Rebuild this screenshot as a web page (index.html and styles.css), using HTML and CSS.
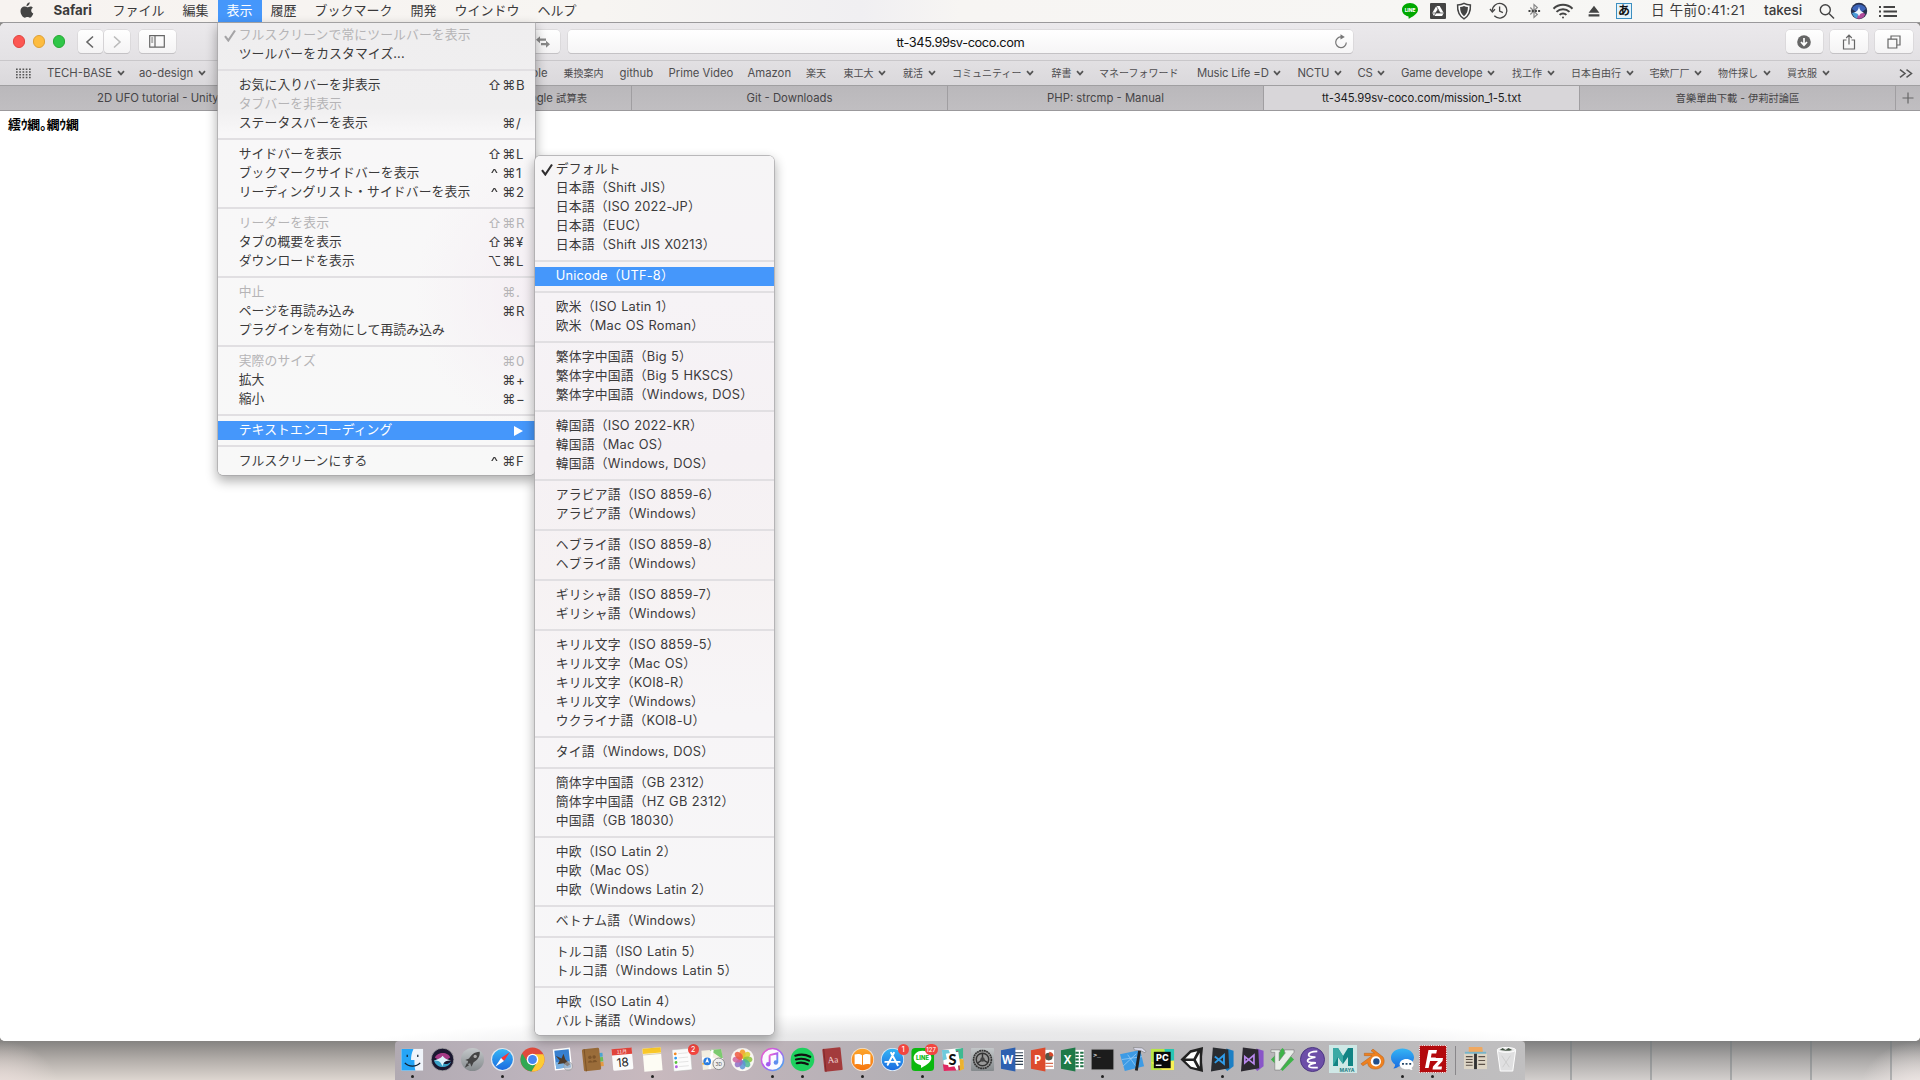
FILE: index.html
```html
<!DOCTYPE html>
<html lang="ja">
<head>
<meta charset="utf-8">
<title>tt-345.99sv-coco.com/mission_1-5.txt</title>
<link rel="stylesheet" href="styles.css">
</head>
<body>
<svg class="defs" width="0" height="0">
  <defs>
    <symbol id="chev" viewBox="0 0 8 6"><path d="M1 1.2L4 4.4L7 1.2" fill="none" stroke="#555" stroke-width="1.7"/></symbol>
    <symbol id="check" viewBox="0 0 12 13"><path d="M1 7.2L4.3 11.5L11 1.5" fill="none" stroke="currentColor" stroke-width="2.1"/></symbol>
    <linearGradient id="blue" x1="0" y1="0" x2="0" y2="1"><stop offset="0" stop-color="#35b5f5"/><stop offset="1" stop-color="#1a6be0"/></linearGradient>
    <linearGradient id="orange" x1="0" y1="0" x2="0" y2="1"><stop offset="0" stop-color="#fda62c"/><stop offset="1" stop-color="#f6760f"/></linearGradient>
    <linearGradient id="silver" x1="0" y1="0" x2="0" y2="1"><stop offset="0" stop-color="#c4c8ca"/><stop offset="1" stop-color="#858a8d"/></linearGradient>
    <linearGradient id="tune" x1="0" y1="0" x2="1" y2="1"><stop offset="0" stop-color="#f560c8"/><stop offset=".5" stop-color="#b060f0"/><stop offset="1" stop-color="#30b8f0"/></linearGradient>
  </defs>
</svg>
<div class="desktop">
  <header class="menubar">
    <nav class="menus">
      <span class="apple"><svg width="14" height="17" viewBox="0 0 14 17"><path fill="#444" d="M9.7 0.3c.1 1.200-.4 2.100-1 2.800-.6.700-1.400 1.200-2.200 1.100-.1-1.100.4-2.100.9-2.700C8 .8 8.900.4 9.700.3zM12.900 5.800c-1.100.7-1.700 1.600-1.700 2.800 0 1.400.8 2.400 2.100 3-.5 1.400-1.800 4.100-3.300 4.100-1 0-1.500-.6-2.600-.6s-1.600.6-2.600.6C2.900 15.700.5 12.300.5 9 .5 6.100 2.400 4.500 4.400 4.500c1.100 0 2 .7 2.900.7.800 0 1.800-.8 3.200-.8 1 0 1.800.5 2.400 1.400z"/></svg></span>
      <span class="mi app">Safari</span><span class="mi">ファイル</span><span class="mi">編集</span><span class="mi on">表示</span><span class="mi">履歴</span><span class="mi">ブックマーク</span><span class="mi">開発</span><span class="mi">ウインドウ</span><span class="mi">ヘルプ</span>
    </nav>
    <div class="status">
      <svg viewBox="0 0 18 18" width="18" height="18"><path fill="#00a800" d="M9 1C4.300 1 1 4 1 7.700c0 3.300 2.700 5.700 6 6.500.8.200.6 1.300.6 2.600 3-1.600 9.400-4.800 9.400-9.100C17 4 13.700 1 9 1z"/><text x="9" y="10" class="t-line">LINE</text></svg>
      <svg viewBox="0 0 18 18" width="18" height="18"><rect x="1" y="1" width="16" height="16" rx="1" fill="#444"/><path d="M7.300 4h3.400l4 7-1.600 3H5L3.300 11z" fill="#fff"/><path d="M9 7.200l2.200 3.800H6.800z" fill="#444"/><path d="M7.300 4l3.800 7M3.500 11h11M9 7.200L5.200 14" stroke="#444" stroke-width=".7"/></svg>
      <svg viewBox="0 0 16 18" width="16" height="18"><path d="M8 1.300C6 2.500 3.600 2.900 1.600 2.900 1.300 9 3 14 8 16.800 13 14 14.700 9 14.400 2.900 12.400 2.900 10 2.500 8 1.300z" fill="#fff" stroke="#444" stroke-width="1.500"/><path d="M8 4C6.700 4.800 5.400 5 4.100 5.100 4 9 5 12 8 14.200 11 12 12 9 11.900 5.100 10.600 5 9.300 4.800 8 4z" fill="#444"/></svg>
      <svg viewBox="0 0 20 18" width="20" height="18" fill="none" stroke="#444" stroke-width="1.300"><path d="M3.300 8.800a7.300 7.300 0 1 1 2 5"/><path d="M1 7l2.300 2.900L6 7.200M10.600 4.500V9.200l3.300 1.500"/></svg>
      <svg viewBox="0 0 14 18" width="14" height="18" fill="none" stroke="#888" stroke-width="1.200"><path d="M3.300 5.500l7 7L7 15.500v-13l3.300 3-7 7"/><path stroke="#444" stroke-width="2" stroke-dasharray="2 1.200" d="M1.500 9h12"/></svg>
      <svg viewBox="0 0 22 18" width="22" height="18" fill="none" stroke="#444" stroke-width="2"><path d="M1.500 6.700a13.500 13.500 0 0 1 19 0M4.500 9.900a9.200 9.200 0 0 1 13 0M7.600 12.900a4.800 4.800 0 0 1 6.800 0"/><circle cx="11" cy="15.400" r="1" fill="#444" stroke="none"/></svg>
      <svg viewBox="0 0 14 18" width="14" height="18" fill="#444"><path d="M7 3.800l5.400 7H1.600zM1.600 12.300h10.800v2.200H1.600z"/></svg>
      <span class="ime">あ</span>
      <span class="clock">日 午前0:41:21</span>
      <span class="user">takesi</span>
      <svg viewBox="0 0 18 18" width="18" height="18" fill="none" stroke="#444" stroke-width="1.400"><circle cx="7.300" cy="7.800" r="5"/><path d="M11 11.500l5 5"/></svg>
      <svg viewBox="0 0 18 18" width="18" height="18"><circle cx="9" cy="9" r="8.200" fill="#26304f"/><path d="M2 7C4 1 14 1 16 7L9 12z" fill="#3b63b8"/><path d="M9 9L15.500 12C13 17 9 17.500 6 16z" fill="#b04a9a"/><path d="M9 9L2 11C3 14 5 16 7 16.500z" fill="#4a9cd8"/><path d="M9 4.500C9.500 8 11 9.500 14 11 11.500 10.800 10 11.200 9 14.500 8 11.200 6.500 10.800 4 11 7 9.500 8.500 8 9 4.500z" fill="#eef6ff"/></svg>
      <svg viewBox="0 0 18 18" width="18" height="18" fill="#444"><path d="M0 4h2v2H0zM4.500 4h11.500v2H4.500zM0 8.500h2v2H0zM4.500 8.500h13.500v2H4.500zM0 13h2v2H0zM4.500 13h13.500v2H4.500z"/></svg>
    </div>
  </header>

  <main class="window">
    <div class="toolbar">
      <div class="lights"><i class="r"></i><i class="y"></i><i class="g"></i></div>
      <div class="navs">
        <span class="btn b26"><svg width="10" height="14" viewBox="0 0 10 14"><path d="M8 1.500L2 7l6 5.500" fill="none" stroke="#666" stroke-width="1.600"/></svg></span>
        <span class="btn b26"><svg width="10" height="14" viewBox="0 0 10 14"><path d="M2 1.500L8 7l-6 5.500" fill="none" stroke="#bbb" stroke-width="1.600"/></svg></span>
      </div>
      <span class="btn b38 side"><svg width="16" height="13" viewBox="0 0 16 13" fill="none" stroke="#666" stroke-width="1.200"><path d="M.7.7h14.600v11.400H.7zM6 .7v11.400"/><path stroke-width="1" d="M2.200 3h2M2.200 5h2M2.200 7h2"/></svg></span>
      <span class="btn b38 swap"><svg width="14" height="12" viewBox="0 0 14 12" fill="#888"><path d="M0 3.700L4 .2v2.400h6v2.200H4v2.400zM14 8.200l-4 3.500V9.300H5V7.100h5V4.700z"/></svg></span>
      <div class="address"><span>tt-345.99sv-coco.com</span><svg width="14" height="15" viewBox="0 0 14 15" fill="none" stroke="#777" stroke-width="1.200"><path d="M7.500 3A5.300 5.300 0 1 0 12.300 8.500"/><path d="M6.500.3v5.200l4.300-2.500z" fill="#777" stroke="none"/></svg></div>
      <div class="tools">
        <span class="btn b38"><svg width="14" height="14" viewBox="0 0 14 14"><circle cx="7" cy="7" r="6.800" fill="#666"/><path d="M7 3v6.500M4 7l3 3.200L10 7" stroke="#fff" stroke-width="1.700" fill="none"/></svg></span>
        <span class="btn b38"><svg width="14" height="16" viewBox="0 0 14 16" fill="none" stroke="#666" stroke-width="1.200"><path d="M4.500 6H1.500v9h11V6h-3M7 10.500V1.500M4.200 4L7 1.200 9.800 4"/></svg></span>
        <span class="btn b38"><svg width="14" height="14" viewBox="0 0 14 14" fill="none" stroke="#666" stroke-width="1.200"><path d="M1 4.200h8.800V13H1zM4 4V1h9v9h-3"/></svg></span>
      </div>
    </div>
    <div class="favs">
      <span class="grid"><svg width="15" height="11" viewBox="0 0 15 11"><path d="M0 1.200h15M0 4h15M0 6.800h15M0 9.600h15" stroke="#555" stroke-width="1.500" stroke-dasharray="1.700 1.550"/></svg></span>
      <span>TECH-BASE<svg><use href="#chev"/></svg></span>
      <span>ao-design<svg><use href="#chev"/></svg></span>
      <span class="end">Apple</span>
      <span class="cj">乗換案内</span>
      <span>github</span>
      <span>Prime Video</span>
      <span>Amazon</span>
      <span class="cj">楽天</span>
      <span class="cj">東工大<svg><use href="#chev"/></svg></span>
      <span class="cj">就活<svg><use href="#chev"/></svg></span>
      <span class="cj">コミュニティー<svg><use href="#chev"/></svg></span>
      <span class="cj">辞書<svg><use href="#chev"/></svg></span>
      <span class="cj">マネーフォワード</span>
      <span class="tight">Music Life =D<svg><use href="#chev"/></svg></span>
      <span class="tight">NCTU<svg><use href="#chev"/></svg></span>
      <span class="tight">CS<svg><use href="#chev"/></svg></span>
      <span class="tight">Game develope<svg><use href="#chev"/></svg></span>
      <span class="cj">找工作<svg><use href="#chev"/></svg></span>
      <span class="cj">日本自由行<svg><use href="#chev"/></svg></span>
      <span class="cj">宅欸厂厂<svg><use href="#chev"/></svg></span>
      <span class="cj">物件探し<svg><use href="#chev"/></svg></span>
      <span class="cj">買衣服<svg><use href="#chev"/></svg></span>
      <span class="more"><svg width="14" height="9" viewBox="0 0 14 9" fill="none" stroke="#555" stroke-width="1.500"><path d="M1 .7l5 3.800-5 3.800M7.500.7l5 3.800-5 3.800"/></svg></span>
    </div>
    <div class="tabs">
      <span class="tab first">2D UFO tutorial - Unity</span>
      <span class="tab second">Google <b>試算表</b></span>
      <span class="tab">Git - Downloads</span>
      <span class="tab">PHP: strcmp - Manual</span>
      <span class="tab active">tt-345.99sv-coco.com/mission_1-5.txt</span>
      <span class="tab"><b>音樂單曲下載 - 伊莉討論區</b></span>
      <span class="plus"><svg width="12" height="12" viewBox="0 0 12 12"><path d="M6 .5v11M.5 6h11" stroke="#666" stroke-width="1.200"/></svg></span>
    </div>
    <div class="page"><p>繧ｳ繝｡繝ｳ繝</p></div>
  </main>

  <footer class="shelf">
    <div class="wall left"></div>
    <div class="dock">
      <div class="ic run"><svg viewBox="0 0 26 26"><path fill="#f0f4fa" d="M1.500 2h22.500v22.500H1.500z"/><path fill="#25a5f7" d="M1.500 2H14c-2 4-2.500 8-2.500 11.500H15c0 4 .2 8 1 11H1.500z"/><path d="M7.500 8v2.500M18.500 8v2.500M5 16.500c4 4.500 12 4.500 16 0" stroke="#123" stroke-width="1.300" fill="none"/></svg></div>
      <div class="ic"><svg viewBox="0 0 26 26"><circle cx="13" cy="13" r="11.800" fill="#1b1730" stroke="#aaa" stroke-width=".8"/><path d="M5 11C7 5 19 4 21 11l-8 5z" fill="#a53a86"/><path d="M4 14c5-2 7 0 9 2s5 3 9-1c-3 8-15 8-18-1z" fill="#3ba2c8"/><path d="M4 14c5-2 7-2 9-5 2 3 5 4 9 5-5 0-8 1-9 6-2-5-4-6-9-6z" fill="#dff3fb"/></svg></div>
      <div class="ic"><svg viewBox="0 0 26 26"><circle cx="13" cy="13" r="12" fill="url(#silver)"/><path d="M20.500 5c-6 0-9 4-11 7l-4 1.500 3 1-1 3.500 3-1 1.500 3.500 2-4.500c4-2 7-6 6.500-11z" fill="#444"/><circle cx="15.800" cy="9.800" r="1.700" fill="#aaa"/><path d="M7 17l-2 4.500L9.500 19z" fill="#444"/></svg></div>
      <div class="ic run"><svg viewBox="0 0 26 26"><circle cx="13" cy="13" r="12" fill="#e4e8ec"/><circle cx="13" cy="13" r="10.800" fill="url(#blue)"/><path d="M20.500 5.500l-6 9-3-3z" fill="#f33"/><path d="M5.500 20.500l6-9 3 3z" fill="#fff"/></svg></div>
      <div class="ic"><svg viewBox="0 0 26 26"><circle cx="13" cy="13" r="12.500" fill="#e04a3c"/><path d="M2.200 6.800A12.500 12.500 0 0 0 12 25.500L18 15.500H8z" fill="#30a853"/><path d="M13 7.500h11.200A12.500 12.500 0 0 1 12 25.500l6-10z" fill="#fccb35"/><circle cx="13" cy="13" r="6" fill="#fff"/><circle cx="13" cy="13" r="4.600" fill="#4586f0"/></svg></div>
      <div class="ic"><svg viewBox="0 0 26 26"><g transform="rotate(-6 13 13)"><path fill="#fff" d="M4 1.500h18v22H4z"/><path fill="#3880d0" d="M5.500 3h15v19h-15z"/><path d="M5.500 15h15v7h-15z" fill="#7bb2e3"/></g><path d="M6 9l6 3 2-5 2 6 5 5-3 2-4-3-6 1 2-4z" fill="#4d3b2b"/><circle cx="19" cy="20" r="4.500" fill="#b8bec6" fill-opacity=".55" stroke="#999" stroke-width=".6"/></svg></div>
      <div class="ic"><svg viewBox="0 0 26 26"><g transform="rotate(-6 13 13)"><path fill="#4ba5d0" d="M20 7h4v4h-4z"/><path fill="#6cbe58" d="M20 11.500h4V16h-4z"/><path fill="#e59a40" d="M20 16.500h4V21h-4z"/><rect x="3" y="1.500" width="18" height="23" rx="1.500" fill="#9b6d3a"/><path d="M5.500 1.500v23" stroke="#7d5429"/><circle cx="10.500" cy="10.500" r="1.800" fill="#7d5429"/><circle cx="15" cy="10.500" r="1.800" fill="#7d5429"/><path d="M8 16c.5-3 4-3 4.500 0 .5-3 4.500-3 5 0z" fill="#7d5429"/></g></svg></div>
      <div class="ic"><svg viewBox="0 0 26 26"><g transform="rotate(-5 13 13)"><rect x="2.500" y="1.500" width="21" height="22.500" rx="1.500" fill="#fafafa"/><path fill="#e2443c" d="M2.500 1.500h21V8h-21z"/><text x="13" y="6.600" class="t-mon">11月</text><text x="13" y="20.500" class="t-day">18</text></g></svg></div>
      <div class="ic run"><svg viewBox="0 0 26 26"><g transform="rotate(-5 13 13)"><path fill="#fdfcf4" d="M3.500 1h19v24h-19z"/><path fill="#fbc929" d="M3.500 1h19v5.500h-19z"/><path d="M3.500 7.500h19" stroke="#c9b890" stroke-width=".7"/></g></svg></div>
      <div class="ic"><svg viewBox="0 0 26 26"><g transform="rotate(-5 13 13)"><rect x="3" y="2" width="19" height="22.500" rx="1" fill="#fcfcfc" stroke="#bbb" stroke-width=".5"/><path d="M9 6.500h10M9 11h10M9 15.500h10M9 20h10" stroke="#ddd" stroke-width=".8"/><circle cx="6" cy="6.500" r="1.500" fill="#f48a24"/><circle cx="6" cy="11" r="1.500" fill="#2e9bf2"/><circle cx="6" cy="15.500" r="1.500" fill="#57c13b"/><circle cx="6" cy="20" r="1.500" fill="#b25fe0"/></g></svg><em>2</em></div>
      <div class="ic"><svg viewBox="0 0 26 26"><path fill="#f3efe2" d="M1.500 4L22 2l3 19L3 24z"/><path fill="#7ccb70" d="M10 3.200L22 2l2 11z"/><path d="M2 12l22 1M13 3l-3 20" stroke="#fff" stroke-width="2.500"/><path d="M2.500 18l8-5" stroke="#f8b840" stroke-width="2"/><circle cx="7.500" cy="15" r="4" fill="#2a7de0"/><path d="M7.500 11.500l2 5-2-1-2 1z" fill="#fff"/><circle cx="19.500" cy="17.500" r="6" fill="#eee" stroke="#888"/><text x="19.500" y="19.500" class="t-3d">3D</text></svg></div>
      <div class="ic"><svg viewBox="0 0 26 26"><circle cx="13" cy="13" r="12" fill="#f8f6f2"/><g fill-opacity=".85"><ellipse cx="13" cy="7.500" rx="3.200" ry="4.800" fill="#f79a20"/><ellipse cx="13" cy="7.500" rx="3.200" ry="4.800" fill="#d9cf2c" transform="rotate(45 13 13)"/><ellipse cx="13" cy="7.500" rx="3.200" ry="4.800" fill="#8cc63c" transform="rotate(90 13 13)"/><ellipse cx="13" cy="7.500" rx="3.200" ry="4.800" fill="#4db893" transform="rotate(135 13 13)"/><ellipse cx="13" cy="7.500" rx="3.200" ry="4.800" fill="#5a93d6" transform="rotate(180 13 13)"/><ellipse cx="13" cy="7.500" rx="3.200" ry="4.800" fill="#8f6fc4" transform="rotate(225 13 13)"/><ellipse cx="13" cy="7.500" rx="3.200" ry="4.800" fill="#d0649c" transform="rotate(270 13 13)"/><ellipse cx="13" cy="7.500" rx="3.200" ry="4.800" fill="#ef5a42" transform="rotate(315 13 13)"/></g></svg></div>
      <div class="ic run"><svg viewBox="0 0 26 26"><circle cx="13" cy="13" r="11.500" fill="#fbfaff" stroke="url(#tune)" stroke-width="1.600"/><path d="M10 8.500l8-2v9.500M10 18V8.500" fill="none" stroke="url(#tune)" stroke-width="2"/><circle cx="8.500" cy="18" r="2.300" fill="#a35cf0"/><circle cx="16.500" cy="16.200" r="2.300" fill="#5f8cf0"/></svg></div>
      <div class="ic run"><svg viewBox="0 0 26 26"><circle cx="13" cy="13" r="12.300" fill="#1ed05e"/><path d="M5.500 9c5-1.600 11-1.200 15.500 1.200M6.200 13c4.500-1.300 9.500-.9 13.500 1.200M7 16.800c4-1 8-.7 11.500 1.100" fill="none" stroke="#111" stroke-width="2.200" stroke-linecap="round"/></svg></div>
      <div class="ic"><svg viewBox="0 0 26 26"><g transform="rotate(-6 13 13)"><rect x="3.500" y="1" width="19" height="24" rx="1" fill="#a33b3c"/><path d="M5 1v24" stroke="#7e2a2c"/><text x="13.500" y="16.500" class="t-aa">Aa</text></g></svg></div>
      <div class="ic run"><svg viewBox="0 0 26 26"><circle cx="13" cy="13" r="12" fill="#f4e4d4"/><circle cx="13" cy="13" r="11.200" fill="url(#orange)"/><path d="M4.800 7.800c3-1 6-.8 7.700.8v10.200c-2-1.200-5-1.400-7.700-.6zM21.200 7.800c-3-1-6-.8-7.700.8v10.200c2-1.200 5-1.400 7.700-.6z" fill="#fff"/></svg></div>
      <div class="ic"><svg viewBox="0 0 26 26"><circle cx="13" cy="13" r="12" fill="#e0edf8"/><circle cx="13" cy="13" r="11.200" fill="url(#blue)"/><path d="M14.500 6L8 18.500M11.500 6L18.500 19M5.500 15.500h9.500M17.500 15.500h3" stroke="#fff" stroke-width="2" stroke-linecap="round"/></svg><em>1</em></div>
      <div class="ic run"><svg viewBox="0 0 26 26"><rect x="1.500" y="1" width="23.500" height="24" rx="4" fill="#0bb80f"/><path fill="#fff" d="M13 4C7.500 4 3.800 7.500 3.800 11.500c0 3.500 3 6.400 7 7.300.9.200.7 1.500.7 3 3.500-1.800 10.700-5.300 10.700-10.300C22.200 7.500 18.500 4 13 4z"/><text x="13" y="14" class="t-line g">LINE</text></svg><em class="w">127</em></div>
      <div class="ic"><svg viewBox="0 0 26 26"><path fill="#fff" d="M2 3l20-2 3 22-20 2z"/><path fill="#6ecadc" d="M2 3h7l3 8-9 3z"/><path fill="#3eb991" d="M16 2l8-1v11l-6 1z"/><path fill="#ecb22e" d="M19 12l5.500 1 .5 10-5 2z"/><path fill="#df2860" d="M3 18l12 2 2 4.500-13 .5z"/><path d="M18 4l2 20" stroke="#9c2c5b" stroke-width="1.500"/><path fill="#fff" d="M6 7l13-2 2 14-12 2z"/><text x="13" y="19" class="t-s">S</text></svg></div>
      <div class="ic"><svg viewBox="0 0 26 26"><rect x="1" y="1" width="24" height="24" rx="1" fill="url(#silver)"/><circle cx="13" cy="13" r="9.300" fill="#999" stroke="#333" stroke-width="1.700" stroke-dasharray="2 .5"/><circle cx="13" cy="13" r="6.500" fill="none" stroke="#333" stroke-width="1.500"/><path d="M13 13V6.500M13 13l-5.500 4M13 13l6 3.500" stroke="#333" stroke-width="1.500"/><circle cx="13" cy="13" r="2.300" fill="#444"/></svg></div>
      <div class="ic"><svg viewBox="0 0 26 26"><path fill="#fff" d="M14 3h11v20H14z"/><path d="M15 6h9M15 9h9M15 12h9M15 15h9M15 18h9" stroke="#345" stroke-width="1.200"/><path fill="#2d60b0" d="M1 3.500L16 .5v25L1 22.500z"/><text x="8" y="17.500" class="t-off">W</text></svg></div>
      <div class="ic"><svg viewBox="0 0 26 26"><path fill="#fff" d="M14 3h11v20H14z"/><circle cx="19.500" cy="10" r="4" fill="#554"/><path d="M20 9.500V5a5 5 0 0 1 4.500 4.500z" fill="#d6492c"/><path d="M16 17h8M16 20h8" stroke="#d66a50" stroke-width="1.200"/><path fill="#dd4b2d" d="M1 3.500L16 .5v25L1 22.500z"/><text x="8" y="17.500" class="t-off">P</text></svg></div>
      <div class="ic"><svg viewBox="0 0 26 26"><path fill="#fff" d="M14 3h11v20H14z"/><path d="M16 6h3.500M21 6h3.500M16 9.500h3.500M21 9.500h3.500M16 13h3.500M21 13h3.500M16 16.500h3.500M21 16.500h3.500M16 20h3.500M21 20h3.500" stroke="#1f7145" stroke-width="1.900"/><path fill="#1f7a48" d="M1 3.500L16 .5v25L1 22.500z"/><text x="8" y="17.500" class="t-off">X</text></svg></div>
      <div class="ic run"><svg viewBox="0 0 26 26"><rect x="1.300" y="2.300" width="23.400" height="21.400" rx=".8" fill="#1c1c1c" stroke="#aaa" stroke-width=".7"/><text x="3.500" y="10" class="t-term">&gt;_</text></svg></div>
      <div class="ic"><svg viewBox="0 0 26 26"><path fill="#3d9be5" d="M0 7.500L21 3l4 17-20 5z"/><path d="M3 20L17 7M8 8l10 14M2 13l21-3" stroke="#a5d3f8" stroke-width=".7"/><path d="M20.500 3l-3.500 21.500" stroke="#222" stroke-width="3"/><path d="M14 .5l9 .5 4 3.500-1 1.500-4-2-7-1z" fill="#dde" stroke="#777" stroke-width=".6"/></svg></div>
      <div class="ic"><svg viewBox="0 0 26 26"><path fill="#b9e546" d="M1 2h24v22H1z"/><path fill="#28c6b5" d="M15 2h10v22l-8-8z"/><path fill="#f8f155" d="M1 16l12 8h12V14z"/><path fill="#0a0a0a" d="M4 5h17.500v17H4z"/><text x="12.800" y="14.500" class="t-pc">PC</text><path d="M6 19h6" stroke="#fff" stroke-width="1.400"/></svg></div>
      <div class="ic"><svg viewBox="0 0 26 26"><path fill="#222" d="M.5 13L10.500 3.500 24 0l-1 10v6l1 10-13.500-3.500z"/><path d="M5.500 12l6-6 6.500-1.500-4 7.500zM5.500 14.500l6 6 6.500 1.500-4-7.500zM20.500 6l-4 7.200 4 7.300z" fill="#fff"/></svg></div>
      <div class="ic run"><svg viewBox="0 0 26 26"><path fill="#1c7fc4" d="M17 1.500l7.500 2.500v16l-6.500 5-3-3z"/><path fill="#2a2c30" d="M3 .5L19 2.500l1 19.500L1 25.500z"/><path d="M5 10l9.500 7.500V8.500L5 16.500" fill="none" stroke="#2f9be8" stroke-width="2"/></svg></div>
      <div class="ic"><svg viewBox="0 0 26 26"><path fill="#8955c8" d="M17 1.500l7.500 2.500v16l-6.500 5-3-3z"/><path fill="#2c2930" d="M3 .5L19 2.500l1 19.500L1 25.500z"/><path d="M5 10l9.500 7.500V8.500L5 16.500z" fill="none" stroke="#b887ec" stroke-width="1.800"/></svg></div>
      <div class="ic"><svg viewBox="0 0 26 26"><path fill="#3eb449" d="M13 1l12 12-12 12L1 13z"/><path fill="#e8ede8" stroke="#777" stroke-width=".6" d="M1 3h9.500v2.500H9.500v9L16 6l-1-.5V3h10v2.500L10.500 24H5V5.500H1z"/></svg></div>
      <div class="ic"><svg viewBox="0 0 26 26"><circle cx="13" cy="13" r="12.500" fill="#6d4fa8" stroke="#4a3580"/><path d="M18 4.500c-5 0-9 1.500-9 3.800 0 2 4 2 7 2.200-5 1-8.500 2-8 4.200.5 1.700 5 1.500 8.500 1.800-5 .8-8 2.500-7 4 1 1.200 5 1 9 1" fill="none" stroke="#fff" stroke-width="1.900"/></svg></div>
      <div class="ic big"><svg viewBox="0 0 28 28"><path fill="#cfe8e6" d="M0 0h28v28H0z"/><path fill="#118484" d="M4 3h5l5 8 5-8h5v18h-5V12l-5 7-5-7v9H4z"/><path d="M4 3h5l5 8v8L9 12 4 21z" fill="#3aa9a4"/><text x="18" y="26.500" class="t-maya">MAYA</text></svg></div>
      <div class="ic"><svg viewBox="0 0 26 26"><path d="M1 17.500L12.500 9H4.500V6.500H15L11.500 4l2-1.800L24 10.500c3 5 0 12.500-8 12.500-5 0-8-3-8-6.500l-5 3z" fill="#ee8120" stroke="#b55c12" stroke-width=".5"/><circle cx="16.500" cy="15" r="5.300" fill="#fff"/><circle cx="17" cy="15" r="3.300" fill="#1f4e8c"/></svg></div>
      <div class="ic run"><svg viewBox="0 0 26 26"><path d="M13 1.500C6.500 1.500 1 5.500 1 11c0 3.200 1.700 5.600 4.300 7.300 0 1.700-.8 3-1.800 4 2.500 0 4.500-1 6-2.300C17 21 25 17 25 11c0-5.500-5.500-9.500-12-9.500z" fill="url(#blue)"/><path d="M17 12.500c-4 0-7 2.500-7 5.500s3 5.200 7 5.200c1 0 2-.1 2.800-.4 1 .8 2.200 1.200 3.700 1.200-.7-.7-1-1.500-1-2.400 1.200-1 2-2.200 2-3.600 0-3-3.500-5.500-7.500-5.500z" fill="#fff"/><path d="M12.500 17.500h2M16.200 17.500h2M20 17.500h2" stroke="#246" stroke-width="1.900"/></svg></div>
      <div class="ic run big"><svg viewBox="0 0 28 28"><path fill="#b30a0d" stroke="#fff" stroke-width="1" stroke-dasharray="1 1.300" d="M.5.5h27v27H.5z"/><path d="M6 23L9.500 5H18l-.8 3.500H12.600l-.7 4h5l-.8 3.400h-5L9.600 23z" fill="#fff"/><path d="M15 13h9l-.5 3-5 5.500h4.500l-.5 3h-9l.5-3 5-5.500h-4.500z" fill="#fff"/></svg></div>
      <div class="bar"></div>
      <div class="ic"><svg viewBox="0 0 26 26"><path fill="#f0a860" d="M6 0h14l1 8H6z"/><path fill="#78b4c8" d="M2 5h22v5H2z"/><path fill="#ddd5c5" d="M1 7h24v16H1z"/><path fill="#333" d="M11.500 7h3v16h-3z"/><path d="M3 10h7M3 13h7M3 16h7M3 19h7M16 10h7M16 14h7M16 18h7" stroke="#5c5148" stroke-width="1.200"/></svg></div>
      <div class="ic trash"><svg viewBox="0 0 26 26"><path fill="#e9e9eb" fill-opacity=".75" stroke="#fff" d="M3.500 3.500h19L19.500 25h-13z"/><ellipse cx="13" cy="3" rx="9.500" ry="2.500" fill="#e8e8e8" stroke="#fff"/><path d="M6 3l3-2 3 2 3-2 4 2-3 1-4 0z" fill="#454"/><path d="M8 9l8 12M17 9L9 21" stroke="#ccc"/></svg></div>
    </div>
    <div class="wall right"><i></i><i></i><i></i><i></i><i></i></div>
  </footer>

  <div class="menu view">
    <div class="row dim"><svg class="ck"><use href="#check"/></svg><span>フルスクリーンで常にツールバーを表示</span></div>
    <div class="row"><span>ツールバーをカスタマイズ...</span></div>
    <hr>
    <div class="row"><span>お気に入りバーを非表示</span><kbd><i>⇧</i>⌘<b>B</b></kbd></div>
    <div class="row dim"><span>タブバーを非表示</span></div>
    <div class="row"><span>ステータスバーを表示</span><kbd>⌘<b>/</b></kbd></div>
    <hr>
    <div class="row"><span>サイドバーを表示</span><kbd><i>⇧</i>⌘<b>L</b></kbd></div>
    <div class="row"><span>ブックマークサイドバーを表示</span><kbd><i class="ctl">^</i>⌘<b>1</b></kbd></div>
    <div class="row"><span>リーディングリスト・サイドバーを表示</span><kbd><i class="ctl">^</i>⌘<b>2</b></kbd></div>
    <hr>
    <div class="row dim"><span>リーダーを表示</span><kbd><i>⇧</i>⌘<b>R</b></kbd></div>
    <div class="row"><span>タブの概要を表示</span><kbd><i>⇧</i>⌘<b>¥</b></kbd></div>
    <div class="row"><span>ダウンロードを表示</span><kbd><i>⌥</i>⌘<b>L</b></kbd></div>
    <hr>
    <div class="row dim"><span>中止</span><kbd>⌘<b>.</b></kbd></div>
    <div class="row"><span>ページを再読み込み</span><kbd>⌘<b>R</b></kbd></div>
    <div class="row"><span>プラグインを有効にして再読み込み</span></div>
    <hr>
    <div class="row dim"><span>実際のサイズ</span><kbd>⌘<b>0</b></kbd></div>
    <div class="row"><span>拡大</span><kbd>⌘<b>+</b></kbd></div>
    <div class="row"><span>縮小</span><kbd>⌘<b>−</b></kbd></div>
    <hr>
    <div class="row hot"><span>テキストエンコーディング</span><svg class="arrow" viewBox="0 0 9 10"><path d="M0 0l9 5-9 5z" fill="#fff"/></svg></div>
    <hr>
    <div class="row"><span>フルスクリーンにする</span><kbd><i class="ctl">^</i>⌘<b>F</b></kbd></div>
  </div>

  <div class="menu enc">
    <div class="row"><svg class="ck"><use href="#check"/></svg><span>デフォルト</span></div>
    <div class="row">日本語（Shift JIS）</div>
    <div class="row">日本語（ISO 2022-JP）</div>
    <div class="row">日本語（EUC）</div>
    <div class="row">日本語（Shift JIS X0213）</div>
    <hr>
    <div class="row hot">Unicode（UTF-8）</div>
    <hr>
    <div class="row">欧米（ISO Latin 1）</div>
    <div class="row">欧米（Mac OS Roman）</div>
    <hr>
    <div class="row">繁体字中国語（Big 5）</div>
    <div class="row">繁体字中国語（Big 5 HKSCS）</div>
    <div class="row">繁体字中国語（Windows, DOS）</div>
    <hr>
    <div class="row">韓国語（ISO 2022-KR）</div>
    <div class="row">韓国語（Mac OS）</div>
    <div class="row">韓国語（Windows, DOS）</div>
    <hr>
    <div class="row">アラビア語（ISO 8859-6）</div>
    <div class="row">アラビア語（Windows）</div>
    <hr>
    <div class="row">ヘブライ語（ISO 8859-8）</div>
    <div class="row">ヘブライ語（Windows）</div>
    <hr>
    <div class="row">ギリシャ語（ISO 8859-7）</div>
    <div class="row">ギリシャ語（Windows）</div>
    <hr>
    <div class="row">キリル文字（ISO 8859-5）</div>
    <div class="row">キリル文字（Mac OS）</div>
    <div class="row">キリル文字（KOI8-R）</div>
    <div class="row">キリル文字（Windows）</div>
    <div class="row">ウクライナ語（KOI8-U）</div>
    <hr>
    <div class="row">タイ語（Windows, DOS）</div>
    <hr>
    <div class="row">簡体字中国語（GB 2312）</div>
    <div class="row">簡体字中国語（HZ GB 2312）</div>
    <div class="row">中国語（GB 18030）</div>
    <hr>
    <div class="row">中欧（ISO Latin 2）</div>
    <div class="row">中欧（Mac OS）</div>
    <div class="row">中欧（Windows Latin 2）</div>
    <hr>
    <div class="row">ベトナム語（Windows）</div>
    <hr>
    <div class="row">トルコ語（ISO Latin 5）</div>
    <div class="row">トルコ語（Windows Latin 5）</div>
    <hr>
    <div class="row">中欧（ISO Latin 4）</div>
    <div class="row">バルト諸語（Windows）</div>
  </div>
</div>
</body>
</html>
```
FILE: styles.css
```css
* { box-sizing: border-box; }
body {
  margin: 0;
  width: 1920px;
  height: 1080px;
  overflow: hidden;
  font-family: Inter, "Noto Sans CJK JP", sans-serif;
  color: #3b3a3b;
}
.defs { display: block; }
.desktop { position: relative; display: flex; flex-direction: column; width: 1920px; height: 1080px; background: #8b8987; }

/* menu bar */
.menubar {
  display: flex;
  justify-content: space-between;
  height: 23px;
  background: linear-gradient(90deg, #f7f3f0 0, #f7f5f2 600px, #f0eff2 860px, #f7f5f3 960px, #f7f7f5 1920px);
  border-bottom: 1px solid #9a999b;
  font-size: 13px;
  line-height: 21.500px;
}
.menus { display: flex; }
.apple { width: 44.500px; padding: 2px 0 0 20px; }
.apple svg { display: block; }
.mi { height: 22px; padding: 0 9px; white-space: nowrap; }
.app { width: 59px; font-weight: 700; font-size: 13.300px; letter-spacing: 0; }
.on { background: #4597fb; color: #fff; }
.status {
  display: grid;
  grid-template-columns: 28px 27px 33px 38px 25px 35px 29px 35px 113px 54px 32px 29px 41px;
  align-items: center;
  height: 22px;
  white-space: nowrap;
}
.status svg { display: block; }
.ime { width: 16px; height: 16px; border: 1px solid #3c8fc0; background: #e4f3fb; font-size: 12px; line-height: 13px; font-weight: 700; text-align: center; color: #111; }
.clock { font-size: 13.600px; letter-spacing: .5px; }
.user { font-size: 13.500px; font-weight: 500; }

/* browser window */
.window { flex: none; height: 1018px; background: #fff; border-radius: 5px; overflow: hidden; }
.toolbar {
  display: flex;
  align-items: center;
  height: 38px;
  padding-right: 7px;
  background: linear-gradient(#ebe9ec, #e3e1e4);
  border-bottom: 1px solid #c9c7ca;
}
.lights { display: flex; gap: 7.500px; width: 77.500px; padding-left: 12.700px; }
.lights i { width: 12.500px; height: 12.500px; border-radius: 50%; }
.r { background: #fc5753; border: 1px solid #e0443f; }
.y { background: #fdbc40; border: 1px solid #dea035; }
.g { background: #2fc648; border: 1px solid #26a934; }
.btn { display: flex; align-items: center; justify-content: center; height: 23px; background: linear-gradient(#fff, #f4f3f4); border-radius: 4px; box-shadow: 0 0 0 .5px #cfcdd0, 0 1px 0 #b9b7ba; }
.btn svg { display: block; }
.b26 { width: 25.500px; }
.b38 { width: 37.700px; }
.navs { display: flex; gap: 1px; }
.side { margin-left: 9px; }
.swap { margin-left: 346px; padding-left: 4px; }
.address {
  display: flex;
  align-items: center;
  justify-content: space-between;
  width: 785.500px;
  height: 23px;
  margin-left: 8px;
  padding: 0 4px 0 328.500px;
  border-radius: 4px;
  background: linear-gradient(#fff, #f6f5f6);
  box-shadow: 0 0 0 .5px #cfcdd0, 0 1px 0 #b9b7ba;
  font-size: 12.800px;
  color: #111;
}
.address svg { margin-right: 1px; }
.address span { padding-top: 2px; letter-spacing: -.39px; }
.tools { display: flex; gap: 7.200px; margin-left: auto; }

.favs {
  display: grid;
  grid-template-columns: 47px 92px 75px 349.500px 56px 49px 79px 58.500px 37.500px 59.500px 49px 99.500px 47.500px 98px 100.500px 60px 43.500px 111px 59px 78.500px 68.500px 69px 1fr 21px;
  align-items: center;
  height: 24px;
  background: linear-gradient(#e2e0e3, #dad8db);
  font-size: 11.300px;
  color: #4f4e50;
  white-space: nowrap;
}
.favs > span { display: flex; align-items: center; height: 24px; }
.favs svg { width: 8px; height: 6px; margin-left: 4.500px; }
.favs .grid { padding-left: 15.500px; }
.favs .grid svg, .favs .more svg { width: auto; height: auto; margin: 0; }
.favs .cj { height: 22px; margin-bottom: 2px; font-size: 10px; }
.favs .cj svg { margin-top: 2px; }
.favs .tight { letter-spacing: -.15px; }
.favs .end { justify-content: flex-end; padding-right: 16px; }

.tabs {
  display: grid;
  grid-template-columns: repeat(6, 316px) 1fr;
  height: 26px;
  border-top: 1px solid #a09fa1;
  border-bottom: 1px solid #9b999c;
  background: linear-gradient(#bab8bb, #c0bec1);
  font-size: 11.300px;
  color: #454446;
}
.tab { display: flex; align-items: center; justify-content: center; border-right: 1px solid #a09ea1; white-space: pre; }
.tab b { padding-bottom: 2px; font-weight: 400; font-size: 10.300px; }
.first { justify-content: flex-start; padding-left: 97px; }
.second { justify-content: flex-end; padding-right: 44px; }
.active { background: #d8d6d9; color: #1c1c1c; letter-spacing: -.08px; }
.plus { display: flex; align-items: center; justify-content: center; }
.page {
  height: 930px;
  background: radial-gradient(ellipse 620px 38px at 960px 940px, #e4e4e6 0, #e9e9ea 50%, #fff 100%);
}
.page p { margin: 0; padding: 3px 8px; font: 700 12.900px/20px "Noto Sans CJK JP", sans-serif; color: #000; }

/* bottom of the desktop */
.shelf { display: flex; height: 39px; }
.left { width: 395px; background: radial-gradient(ellipse 60px 50px at 0 50px, #e8dcd9, #e8dcd900), linear-gradient(#858381, #b0aba7 45%, #ddd6d0); }
.right { flex: 1; display: flex; padding-left: 45px; gap: 78px; background: radial-gradient(ellipse 60px 50px at 395px 50px, #f0e8e6, #f0e8e600), linear-gradient(#7f7f7f, #a9a7a6 45%, #d3cfcd); }
.right i { width: 2px; background: #6b7478; opacity: .4; filter: blur(.5px); }
.dock {
  display: flex;
  width: 1130px;
  padding-left: 2.600px;
  border-radius: 4px 4px 0 0;
  background: linear-gradient(90deg, #b1aab2 0, #bcb3bc 130px, #c8b9be 260px, #bdb3b9 380px, #b3b0b5 520px, #b6b4b7 800px, #c0bfc0 1130px);
}
.ic { position: relative; display: flex; justify-content: center; width: 30px; height: 39px; padding-top: 5.500px; }
.ic > svg { width: 25px; height: 25px; overflow: visible; }
.big { padding-top: 4px; }
.big > svg { flex: none; width: 28px; height: 28px; }
.trash { left: 1px; }
.run::after { content: ""; position: absolute; left: 13.500px; top: 34px; width: 3px; height: 3px; border-radius: 50%; background: #222; }
.ic em { position: absolute; right: -1px; top: 3px; min-width: 11px; height: 11px; border-radius: 6px; background: #f2453f; color: #fff; font: 500 7px/11px Inter, sans-serif; text-align: center; }
.ic .w { right: 0; width: 13px; font-size: 6px; }
.bar { width: 1px; height: 29px; margin: 5px 4.500px 0 7.500px; background: #89878a; }
.t-line { font: 800 4.800px Inter, sans-serif; text-anchor: middle; fill: #fff; }
.t-line.g { font-size: 6px; fill: #0bb80f; }
.t-mon { font: 5px "Noto Sans CJK JP", sans-serif; text-anchor: middle; fill: #fff; }
.t-day { font: 12.500px Inter, sans-serif; text-anchor: middle; fill: #222; }
.t-3d { font: 5px Inter, sans-serif; text-anchor: middle; fill: #555; }
.t-aa { font: 9.500px "Liberation Serif", serif; text-anchor: middle; fill: #f2dcdc; }
.t-s { font: 900 15px Lato, sans-serif; text-anchor: middle; fill: #111; }
.t-off { font: 700 12px "Open Sans", sans-serif; text-anchor: middle; fill: #fff; }
.t-term { font: 700 6.500px "Liberation Mono", monospace; fill: #eee; }
.t-pc { font: 800 9.500px Inter, sans-serif; text-anchor: middle; fill: #fff; }
.t-maya { font: 700 5px Inter, sans-serif; text-anchor: middle; fill: #2a7f85; }

/* pull-down menus */
.menu { position: absolute; padding: 4px 0; font-size: 12.800px; line-height: 18px; box-shadow: 0 0 0 .7px #a8a7a9, 0 5px 12px 1px rgba(0, 0, 0, .32); }
.view {
  left: 218px; top: 23px; width: 317px; height: 452px;
  padding-top: 3px;
  border-radius: 0 0 5px 5px;
  letter-spacing: .12px;
  background: radial-gradient(ellipse 120px 140px at 317px 270px, #f5eff4, #f5eff400), linear-gradient(#efeeef 0, #f0eff0 85px, #f8f7f8 110px, #f8f8f8 100%);
}
.enc {
  left: 535px; top: 156px; width: 239px; height: 879px;
  border-radius: 5px;
  letter-spacing: .22px;
  word-spacing: .5px;
  background: linear-gradient(#f6f5f6 0, #f6f3f6 140px, #f5f1f4 300px, #f6f2f3 420px, #f7f5f7 560px, #f7f7f8 100%);
}
.row { position: relative; display: flex; height: 19px; padding: 0 9px 0 20.700px; white-space: nowrap; }
.dim { color: #b5b4b6; }
.hot { background: #4597fb; color: #fff; }
.menu hr { height: 2px; margin: 5px 0; border: 0; background: #e1dfe2; }
.ck { position: absolute; left: 6px; top: 3px; width: 12px; height: 13px; color: #2f2e2f; }
.dim .ck { color: #a5a4a6; }
kbd { display: flex; margin-left: auto; font: inherit; font-size: 13.200px; letter-spacing: 0; }
kbd i { margin-right: 1px; font-style: normal; }
kbd .ctl { width: 13px; text-align: center; transform: scaleX(1.25); }
kbd b { display: block; width: 10px; margin-left: .5px; font-weight: 400; }
.arrow { width: 9px; height: 10px; margin: 4.500px 3.500px 0 auto; }
```
